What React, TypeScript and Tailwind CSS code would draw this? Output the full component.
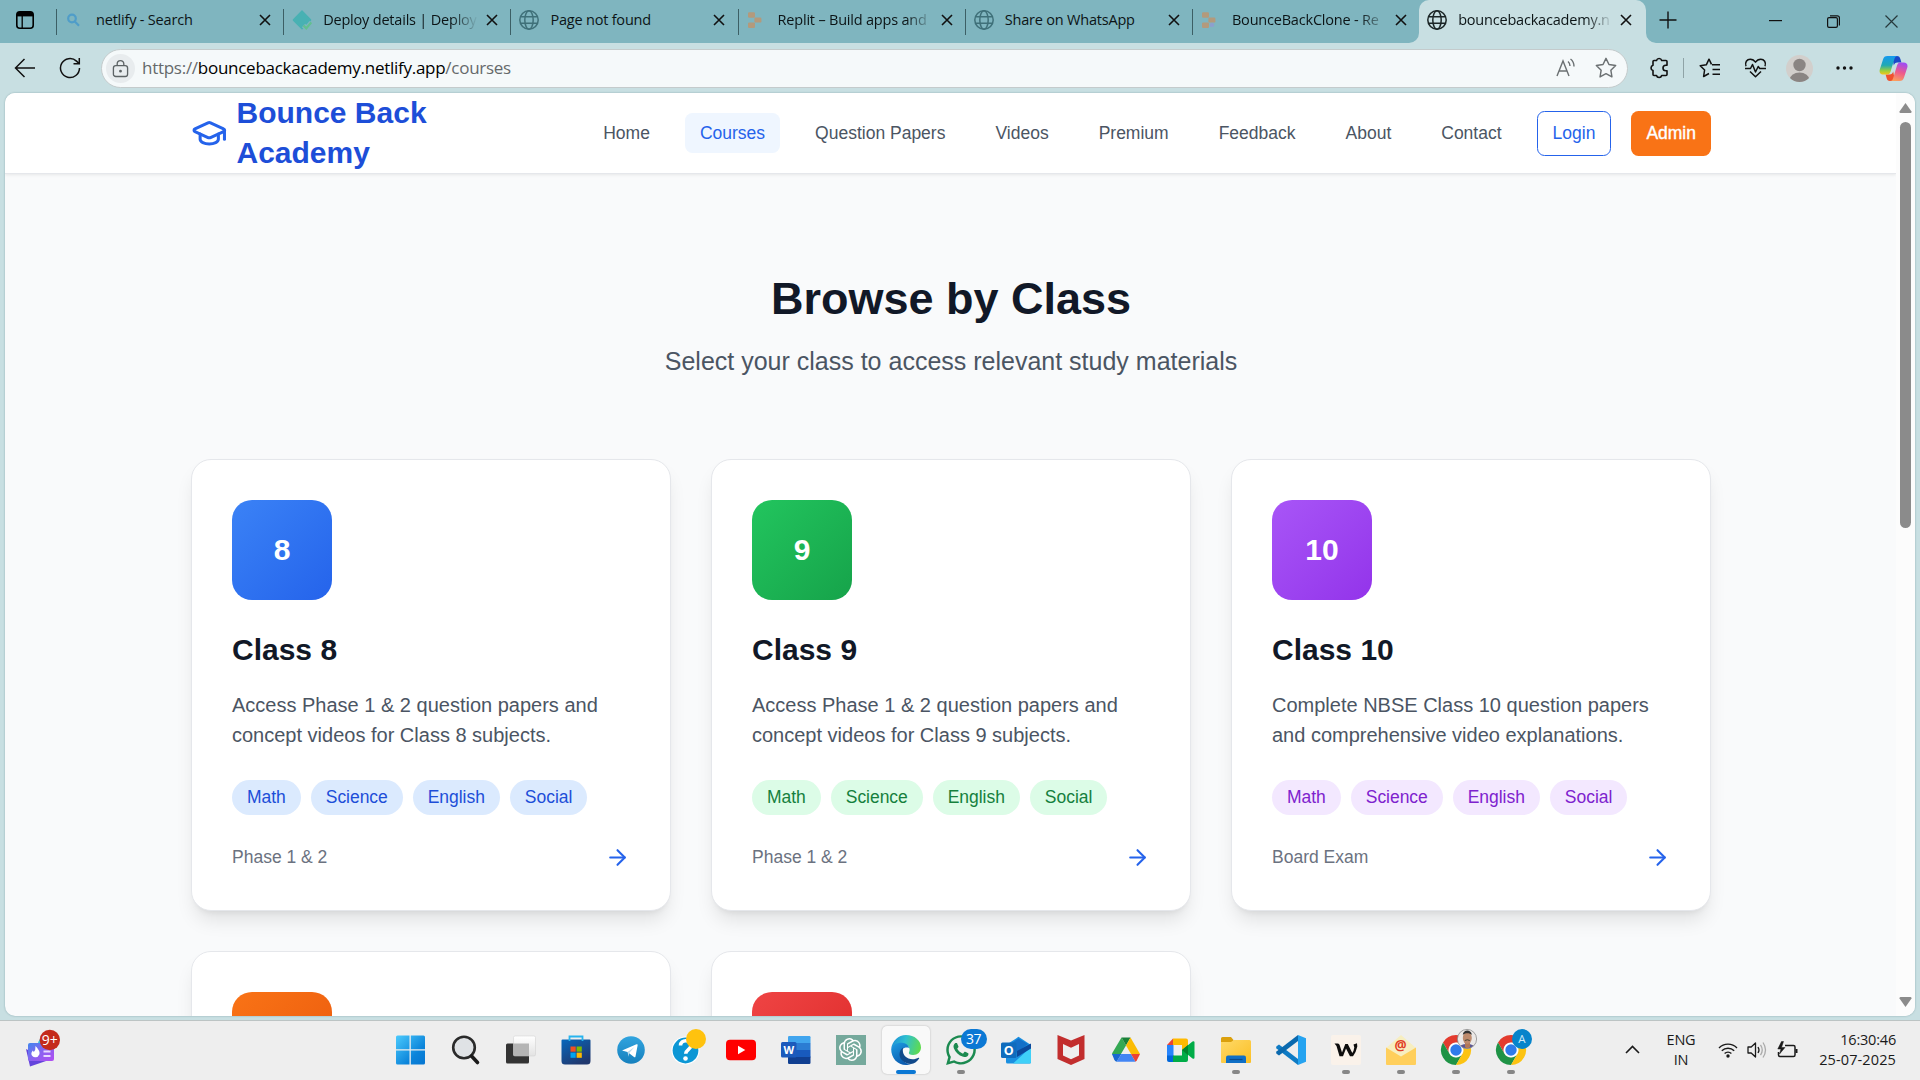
import type { ReactNode } from "react";
import { ArrowRight, GraduationCap } from "lucide-react";
import { FaWhatsapp } from "react-icons/fa";
import { SiOpenai } from "react-icons/si";

const ui = "font-['Open_Sans','Noto_Sans',sans-serif]";

/* ---------- Browser chrome ---------- */

function CloseX({ className = "" }: { className?: string }) {
  return (
    <svg className={className} width="12" height="12" viewBox="0 0 12 12" stroke="#111" strokeWidth="1.6" fill="none">
      <path d="M1 1l10 10M11 1L1 11" />
    </svg>
  );
}

function Globe({ color, width = 1.5 }: { color: string; width?: number }) {
  return (
    <svg width="20" height="20" viewBox="0 0 20 20" fill="none" stroke={color} strokeWidth={width}>
      <circle cx="10" cy="10" r="9.2" />
      <ellipse cx="10" cy="10" rx="4.2" ry="9.2" />
      <path d="M1.6 6.8h16.8M1.6 13.2h16.8" />
    </svg>
  );
}

function SearchFavicon() {
  return (
    <svg width="20" height="20" viewBox="0 0 20 20" fill="none" stroke="#4f9dc9" strokeWidth="2.2">
      <circle cx="7" cy="8.5" r="3.8" />
      <path d="M9.8 11.5l4.2 4.2" />
    </svg>
  );
}

function DeployFavicon() {
  return (
    <svg width="20" height="20" viewBox="0 0 20 20">
      <path d="M9.500 .5q.5-.5 1 0l8.500 8.800q.7.700 0 1.400l-8.500 8.600q-.5.500-1 0L1 10.700q-.7-.7 0-1.400z" fill="#48b1b3" />
      <path d="M11.500 15.500l2.800 2.800 5-5.800" fill="none" stroke="#7fb5bf" strokeWidth="4.600" />
      <path d="M11.500 15.500l2.800 2.800 5-5.800" fill="none" stroke="#62c08f" strokeWidth="2.200" />
    </svg>
  );
}

function ReplitFavicon({ dotted = false }: { dotted?: boolean }) {
  return (
    <svg width="20" height="20" viewBox="0 0 20 20" fill="#b39a7c">
      <rect x="1" y="2.2" width="7" height="5.6" rx="1.2" />
      <rect x="7.400" y="7.600" width="7" height="5" rx="1.2" />
      <rect x="1" y="12.400" width="7" height="5.600" rx="1.2" />
      {dotted && <circle cx="11" cy="14.900" r="2.200" fill="#8e9fce" />}
    </svg>
  );
}

const tabs: { title: string; icon: ReactNode; fade?: boolean }[] = [
  { title: "netlify - Search", icon: <SearchFavicon /> },
  { title: "Deploy details | Deploy", icon: <DeployFavicon />, fade: true },
  { title: "Page not found", icon: <Globe color="#3f7079" /> },
  { title: "Replit – Build apps and", icon: <ReplitFavicon />, fade: true },
  { title: "Share on WhatsApp", icon: <Globe color="#3f7079" /> },
  { title: "BounceBackClone - Re", icon: <ReplitFavicon dotted />, fade: true },
];

function TabLabel({ title, fade }: { title: string; fade?: boolean }) {
  return (
    <span
      className={`ml-[11px] w-[155px] whitespace-nowrap text-[14.5px] leading-5 tracking-[-0.2px] text-[#0c1416] ${
        fade ? "[mask-image:linear-gradient(to_right,#000_128px,transparent_155px)]" : ""
      }`}
    >
      {title}
    </span>
  );
}

function TabStrip() {
  return (
    <div className="flex h-[43px] bg-[#7fb5bf]">
      <div className="flex w-14 items-center pb-[3px] pl-4">
        <svg width="18" height="18" viewBox="0 0 18 18" fill="none" stroke="#000" strokeWidth="1.6">
          <rect x=".8" y=".8" width="16.4" height="16.4" rx="3" />
          <path d="M1 3.2h16" strokeWidth="4.4" />
          <path d="M6.2 5v12" strokeWidth="1.3" />
        </svg>
      </div>
      {tabs.map((t) => (
        <div key={t.title} className="flex w-[227.200px] items-center pb-[3px]">
          <span className="mt-1 h-[26px] w-px bg-[#3c5f65]" />
          <span className="ml-2">{t.icon}</span>
          <TabLabel title={t.title} fade={t.fade} />
          <CloseX className="ml-[8px]" />
        </div>
      ))}
      <div className="relative flex w-[227px] items-center rounded-t-[10px] bg-[#c8dfe2] pb-[3px]">
        <svg className="absolute -left-2.5 bottom-0" width="10" height="10" fill="#c8dfe2"><path d="M10 0v10H0A10 10 0 0 0 10 0z" /></svg>
        <svg className="absolute -right-2.5 bottom-0" width="10" height="10" fill="#c8dfe2"><path d="M0 0v10h10A10 10 0 0 1 0 0z" /></svg>
        <span className="ml-2"><Globe color="#1b2526" /></span>
        <TabLabel title="bouncebackacademy.n" fade />
        <CloseX className="ml-[7px]" />
      </div>
      <svg className="ml-[13px] mt-[11px]" width="18" height="18" viewBox="0 0 18 18" stroke="#111" strokeWidth="1.4"><path d="M9 .5v17M.5 9h17" /></svg>
      <div className="ml-auto flex items-start gap-[45px] pr-[22px] pt-[15px]">
        <svg width="13" height="13" stroke="#111" strokeWidth="1.2"><path d="M0 5.6h13" /></svg>
        <svg width="13" height="13" viewBox="0 0 13 13" fill="none" stroke="#111" strokeWidth="1.2">
          <rect x=".6" y="2.6" width="9.8" height="9.8" rx="1.4" />
          <path d="M3 .8h7.400a2 2 0 0 1 2 2v7.600" />
        </svg>
        <svg width="13" height="13" stroke="#26383b" strokeWidth="1.2"><path d="M.5 .5l12 12M12.5 .5l-12 12" /></svg>
      </div>
    </div>
  );
}

const starPath = "M10 1.2l2.7 5.6 6.1.9-4.4 4.3 1 6.1-5.4-2.9-5.4 2.9 1-6.1L1.2 7.7l6.1-.9z";

function CopilotLogo() {
  return (
    <svg width="29" height="27" viewBox="0 0 29 27">
      <defs>
        <linearGradient id="cpl" x1="0" y1="0" x2="0" y2="1">
          <stop offset="0" stopColor="#1599f0" />
          <stop offset=".5" stopColor="#20a9b4" />
          <stop offset=".8" stopColor="#9ccf3a" />
          <stop offset="1" stopColor="#f5c518" />
        </linearGradient>
        <linearGradient id="cpr" x1=".6" y1="0" x2=".3" y2="1">
          <stop offset="0" stopColor="#a14df2" />
          <stop offset=".5" stopColor="#ee5a8c" />
          <stop offset="1" stopColor="#fba15c" />
        </linearGradient>
      </defs>
      <path d="M13 1h5c2 0 2.800 1 3.400 3l1 3.500h-4c-2 0-3 1-3.600 3z" fill="#1b49c8" />
      <path d="M16 26h-5c-2 0-3-1-3.400-3l-1-3.500h4c2 0 3-1 3.600-3z" fill="#f0512d" />
      <path d="M8.500 1H19c-2 0-3 1-3.600 3l-3.800 12.500c-.6 2-1.500 3-3.600 3H4.500c-3 0-4.500-2-3.700-5L4 4.500C4.700 2 6 1 8.500 1z" fill="url(#cpl)" />
      <path d="M20.500 26H11c2 0 2.600-1 3.200-3L18 10.500c.6-2 1.500-3 3.600-3h3c3 0 4.500 2 3.700 5L25 22.500c-.7 2.500-2 3.500-4.500 3.500z" fill="url(#cpr)" />
    </svg>
  );
}

function Toolbar() {
  return (
    <div className="flex h-[50px] items-center bg-[#c8dfe2] pl-[14px] pr-[12px]">
      <svg width="22" height="22" viewBox="0 0 22 22" fill="none" stroke="#111" strokeWidth="1.5"><path d="M21 11H1.500M10.500 2L1.500 11l9 9" /></svg>
      <svg className="ml-[23px]" width="22" height="22" viewBox="0 0 22 22" fill="none" stroke="#111" strokeWidth="1.5">
        <path d="M20.500 11a9.500 9.500 0 1 1-3-6.900l2.500 2.400M20.300 1v5.800h-5.800" />
      </svg>
      <div className="ml-5 flex h-[39px] w-[1527px] items-center rounded-full border border-[#c4cbcc] bg-[#f5f9fa] pl-1 pr-[10px]">
        <span className="flex size-[29px] items-center justify-center rounded-full bg-[#e8ecee]">
          <svg width="17" height="19" viewBox="0 0 18 19" fill="none" stroke="#5d6365" strokeWidth="1.4">
            <rect x="1.5" y="6.5" width="15" height="11.5" rx="2.5" />
            <path d="M5.500 6.500V4.600a3.500 3.500 0 0 1 7 0v1.900" />
            <circle cx="9" cy="12.3" r=".8" fill="#5d6365" />
          </svg>
        </span>
        <span className="ml-[7px] whitespace-nowrap text-[17px] leading-6 tracking-[-0.27px] text-[#65696b]">
          https://<span className="text-black">bouncebackacademy.netlify.app</span>/courses
        </span>
        <svg className="ml-auto" width="20" height="20" viewBox="0 0 20 20" fill="none" stroke="#6b7072" strokeWidth="1.4">
          <path d="M1 18L7 3l6 15M3 13h8M12 3.500c1.500 1.200 2 2.800 2 4.500M14.500 1c2.500 1.800 3.500 4.500 3.500 7.500" />
        </svg>
        <svg className="ml-[19px]" width="22" height="22" viewBox="0 0 20 20" fill="none" stroke="#6b7072" strokeWidth="1.3" strokeLinejoin="round"><path d={starPath} /></svg>
      </div>
      <svg className="ml-[21px]" width="20" height="22" viewBox="0 0 20 22" fill="none" stroke="#111" strokeWidth="1.6" strokeLinejoin="round">
        <path d="M4 4.500a1 1 0 0 1 1-1h2.500a2.700 2.700 0 0 1 5.200 0H17a1 1 0 0 1 1 1v3.700h-1.200a2.800 2.800 0 0 0 0 5.600H18v3.700a1 1 0 0 1-1 1h-4.300a2.700 2.700 0 0 1-5.200 0H5a1 1 0 0 1-1-1v-4a2.700 2.700 0 0 1 0-5.200z" />
      </svg>
      <span className="ml-[14px] h-5 w-px bg-[#8fa3a6]" />
      <svg className="ml-[15px]" width="22" height="20" viewBox="0 0 22 20" fill="none" stroke="#111" strokeWidth="1.5" strokeLinejoin="round">
        <path d="M12.500 6.300L10 1.200 7.300 6.800l-6.100.9L5.600 12l-1 6.500 5.400-3" />
        <path d="M13 6.700h8M13.500 11.500H21M13.500 16.200H21" />
      </svg>
      <svg className="ml-[23px]" width="23" height="20" viewBox="0 0 23 20" fill="none" stroke="#111" strokeWidth="1.5" strokeLinejoin="round">
        <path d="M2 8.300C.5 4.300 3 1.200 6.200 1.200c2.300 0 4 1 5.300 3 1.300-2 3-3 5.300-3C20 1.200 22.500 4.300 21 8.300" />
        <path d="M1 10.500h5.500l2-4 3 7.500 2.700-5.500 1.500 2H22M6 13.500l5.500 5.300 5.500-5.300" />
      </svg>
      <svg className="ml-[19px]" width="27" height="27" viewBox="0 0 27 27">
        <clipPath id="av"><circle cx="13.500" cy="13.500" r="13.500" /></clipPath>
        <g clipPath="url(#av)"><rect width="27" height="27" fill="#d2cfcc" /><circle cx="13.500" cy="10" r="6.200" fill="#8a8583" /><ellipse cx="13.500" cy="25" rx="10" ry="7.500" fill="#8a8583" /></g>
      </svg>
      <svg className="ml-[23px]" width="17" height="4" fill="#111"><circle cx="2" cy="2" r="1.700" /><circle cx="8.500" cy="2" r="1.700" /><circle cx="15" cy="2" r="1.700" /></svg>
      <span className="ml-auto"><CopilotLogo /></span>
    </div>
  );
}

/* ---------- Web page ---------- */

const navLinks = ["Home", "Courses", "Question Papers", "Videos", "Premium", "Feedback", "About", "Contact"];

function SiteHeader() {
  return (
    <header className="relative flex h-[81px] items-center justify-between border-b border-[#e5e7eb] bg-white pl-[186px] pr-[185px] shadow-[0_1px_3px_rgba(0,0,0,0.08)]">
      <div className="flex items-center gap-[9px]">
        <GraduationCap className="size-[36.5px] text-[#2563eb]" strokeWidth={2} />
        <div className="w-[215px] text-[30px] font-bold leading-10 text-[#1d4ed8]">Bounce Back Academy</div>
      </div>
      <nav className="flex items-center gap-5 text-[17.5px] leading-[25px]">
        {navLinks.map((l) => (
          <a
            key={l}
            className={`whitespace-nowrap rounded-[7.5px] px-[15px] py-[7.5px] ${
              l === "Courses" ? "bg-[#eff6ff] text-[#2563eb]" : "text-[#4b5563]"
            }`}
          >
            {l}
          </a>
        ))}
        <a className="rounded-[7.5px] border border-[#2563eb] px-[15px] py-[9px] text-[#2563eb]">Login</a>
        <a className="rounded-[7.5px] bg-[#f97316] px-[15px] py-2.5 text-white [-webkit-text-stroke:0.4px_white]">Admin</a>
      </nav>
    </header>
  );
}

type ClassInfo = {
  n: string;
  badge: string;
  pill: string;
  text: string[];
  note: string;
};

const classes: ClassInfo[] = [
  { n: "8", badge: "from-[#3b82f6] to-[#2563eb]", pill: "bg-[#dbeafe] text-[#1d4ed8]", text: ["Access Phase 1 & 2 question papers and", "concept videos for Class 8 subjects."], note: "Phase 1 & 2" },
  { n: "9", badge: "from-[#22c55e] to-[#16a34a]", pill: "bg-[#dcfce7] text-[#15803d]", text: ["Access Phase 1 & 2 question papers and", "concept videos for Class 9 subjects."], note: "Phase 1 & 2" },
  { n: "10", badge: "from-[#a855f7] to-[#9333ea]", pill: "bg-[#f3e8ff] text-[#7e22ce]", text: ["Complete NBSE Class 10 question papers", "and comprehensive video explanations."], note: "Board Exam" },
];

/* Cards of the second row: only their tops reach into the viewport. */
const nextBadges = ["from-[#f97316] to-[#ea580c]", "from-[#ef4444] to-[#dc2626]"];

const cardClass =
  "rounded-[20px] border border-[#e5e7eb] bg-white p-10 shadow-[0_12.5px_19px_-4px_rgba(0,0,0,0.1),0_5px_7.5px_-5px_rgba(0,0,0,0.1)]";

function ClassCard({ c }: { c: ClassInfo }) {
  return (
    <article className={cardClass}>
      <div className={`flex size-[100px] items-center justify-center rounded-[20px] bg-linear-to-br text-[30px] font-bold leading-10 text-white ${c.badge}`}>{c.n}</div>
      <h3 className="mt-[30px] text-[30px] font-bold leading-10 text-[#111827]">Class {c.n}</h3>
      <p className="mt-5 whitespace-nowrap text-xl leading-[30px] text-[#4b5563]">
        {c.text[0]}
        <br />
        {c.text[1]}
      </p>
      <div className="mt-[30px] flex gap-2.5">
        {["Math", "Science", "English", "Social"].map((s) => (
          <span key={s} className={`rounded-full px-[15px] py-[5px] text-[17.5px] leading-[25px] tracking-[-0.04px] ${c.pill}`}>{s}</span>
        ))}
      </div>
      <div className="mt-[30px] flex items-center justify-between">
        <span className="text-[17.5px] leading-[25px] text-[#6b7280]">{c.note}</span>
        <ArrowRight className="size-[25px] text-[#2563eb]" strokeWidth={2} />
      </div>
    </article>
  );
}

function WebPage() {
  return (
    <div className="mx-[5px] flex h-[923px] overflow-hidden rounded-[10px] bg-[#f9fafb] font-['Liberation_Sans',Arial,sans-serif] shadow-[0_0_2px_rgba(0,60,70,0.35)]">
      <main className="h-full min-w-0 flex-1 overflow-hidden">
        <SiteHeader />
        <section className="pl-[186px] pr-[185px] pt-[100px]">
          <h1 className="text-center text-[45px] font-bold leading-[50px] text-[#111827]">Browse by Class</h1>
          <p className="mt-5 text-center text-[25px] leading-[35px] text-[#4b5563]">Select your class to access relevant study materials</p>
          <div className="mt-20 grid grid-cols-3 gap-10">
            {classes.map((c) => (
              <ClassCard key={c.n} c={c} />
            ))}
            {nextBadges.map((b) => (
              <article key={b} className={cardClass}>
                <div className={`size-[100px] rounded-[20px] bg-linear-to-br ${b}`} />
              </article>
            ))}
          </div>
        </section>
      </main>
      <div className="flex w-[19px] flex-col items-center bg-[#fcfcfc] pb-[9px] pt-[10px]">
        <svg width="13" height="10" fill="#8b8b8b"><path d="M6.500 0l6 8.500q.3 1.500-1 1.500h-10q-1.300 0-1-1.500z" /></svg>
        <div className="mt-[9px] h-[406px] w-[11px] rounded-full bg-[#8b8b8b]" />
        <svg className="mt-auto" width="13" height="10" fill="#8b8b8b"><path d="M6.500 10l6-8.500q.3-1.500-1-1.500h-10q-1.300 0-1 1.500z" /></svg>
      </div>
    </div>
  );
}

/* ---------- Taskbar ---------- */

function Ic({ children }: { children: ReactNode }) {
  return <svg width="30" height="30" viewBox="0 0 30 30" className="overflow-visible">{children}</svg>;
}

function Chrome() {
  return (
    <>
      <path d="M2 7.500a15 15 0 0 1 26 0H15A7.500 7.500 0 0 0 8.500 18.750z" fill="#e33b2e" />
      <path d="M2 7.500L8.500 18.750A7.500 7.500 0 0 0 21.500 18.750L15 30A15 15 0 0 1 2 7.500z" fill="#1f9346" />
      <path d="M28 7.500H15a7.500 7.500 0 0 1 6.500 11.250L15 30A15 15 0 0 0 28 7.500z" fill="#fcc312" />
      <circle cx="15" cy="15" r="7.2" fill="#fff" />
      <circle cx="15" cy="15" r="5.7" fill="#2f7bea" />
    </>
  );
}

const apps: { id: string; icon: ReactNode; running?: boolean; active?: boolean }[] = [
  {
    id: "start",
    icon: (
      <Ic>
        <linearGradient id="win" gradientUnits="userSpaceOnUse" x1="0" y1="0" x2="30" y2="30"><stop offset="0" stopColor="#4ccbfd" /><stop offset=".65" stopColor="#0b84da" /><stop offset="1" stopColor="#0574d0" /></linearGradient>
        <path d="M1.500 .5H13.500V14.300H0V2A1.500 1.500 0 0 1 1.500 .5zM14.800 .5H27.500A1.500 1.500 0 0 1 29 2V14.300H14.800zM0 15.600H13.500V29.500H1.500A1.500 1.500 0 0 1 0 28zM14.800 15.600H29V28A1.500 1.500 0 0 1 27.500 29.500H14.800z" fill="url(#win)" />
      </Ic>
    ),
  },
  {
    id: "search",
    icon: (
      <Ic>
        <circle cx="13" cy="12.5" r="10.8" fill="#dfe2e5" stroke="#2a2a2a" strokeWidth="2.6" />
        <path d="M20.500 21l6 6.500" stroke="#1b1b1b" strokeWidth="3.600" strokeLinecap="round" />
      </Ic>
    ),
  },
  {
    id: "taskview",
    icon: (
      <Ic>
        <linearGradient id="tv" x1="0" y1="0" x2="0" y2="1"><stop offset="0" stopColor="#fff" /><stop offset="1" stopColor="#e2e2e2" /></linearGradient>
        <rect x="0" y="8.500" width="23" height="20" rx="1.500" fill="#333" />
        <rect x="7.500" y="1" width="22" height="20" rx="1.500" fill="url(#tv)" stroke="#ccc" strokeWidth=".5" />
        <path d="M7.500 8.500H23V21H8.500q-1 0-1-1z" fill="#b4b4b4" />
      </Ic>
    ),
  },
  {
    id: "store",
    icon: (
      <Ic>
        <linearGradient id="st" x1="0" y1="0" x2=".6" y2="1"><stop offset="0" stopColor="#0868bd" /><stop offset="1" stopColor="#20386e" /></linearGradient>
        <path d="M1.500 4.500h27a1 1 0 0 1 1 1V26a3.500 3.500 0 0 1-3.500 3.500H4A3.500 3.500 0 0 1 .5 26V5.500a1 1 0 0 1 1-1z" fill="url(#st)" />
        <path d="M8.500 6V1.500h13V6" fill="none" stroke="#28b4ee" strokeWidth="1.800" />
        <path d="M9.500 11.500h5.200v5.200H9.500z" fill="#f25022" /><path d="M15.600 11.500h5.200v5.200h-5.200z" fill="#7fba00" />
        <path d="M9.500 17.600h5.200v5.200H9.500z" fill="#00a4ef" /><path d="M15.600 17.600h5.200v5.200h-5.200z" fill="#ffb900" />
      </Ic>
    ),
  },
  {
    id: "telegram",
    icon: (
      <Ic>
        <linearGradient id="tg" x1="0" y1="0" x2="0" y2="1"><stop offset="0" stopColor="#31a4df" /><stop offset="1" stopColor="#1680bd" /></linearGradient>
        <circle cx="15" cy="15" r="13.8" fill="url(#tg)" />
        <path d="M6 15.500L20.500 9.300c.8-.3 1.300.2 1.100 1.100L19.500 21.500c-.2.900-.8 1-1.500.6L11.500 17z" fill="#fff" />
        <path d="M11.500 17l7-5-5.300 6.100-.5 3.600z" fill="#b9d8ea" />
      </Ic>
    ),
  },
  {
    id: "help",
    icon: (
      <Ic>
        <circle cx="14.500" cy="15.500" r="13.500" fill="#0c97d5" stroke="#fff" strokeWidth="1.200" />
        <path d="M9.500 10.500c0-6.500 10.500-6 10.500-.3 0 4.500-5.300 4.200-5.300 8.600" fill="none" stroke="#fff" strokeWidth="3.600" />
        <circle cx="14.500" cy="23.500" r="2.300" fill="#fff" />
        <circle cx="25" cy="4" r="10" fill="#ffc20e" />
      </Ic>
    ),
  },
  {
    id: "youtube",
    icon: (
      <Ic>
        <rect x="0" y="4.800" width="30" height="20.500" rx="4" fill="#f00" />
        <path d="M12 10.800v8.400l7.300-4.200z" fill="#fff" />
      </Ic>
    ),
  },
  {
    id: "word",
    icon: (
      <Ic>
        <rect x="7" y="1" width="22.500" height="7.500" rx="1.200" fill="#41a5ee" /><rect x="7" y="8" width="22.500" height="7" fill="#2b7cd3" />
        <rect x="7" y="21" width="22.500" height="8" rx="1.200" fill="#103f91" /><rect x="7" y="15" width="22.500" height="7" fill="#185abd" />
        <rect x="0" y="7" width="15.500" height="15.500" rx="1.500" fill="#1b5abc" />
        <text x="7.700" y="18.800" textAnchor="middle" fontSize="11" fontWeight="700" fill="#fff">W</text>
      </Ic>
    ),
  },
  {
    id: "chatgpt",
    icon: <span className="flex size-[30px] items-center justify-center bg-[#75a99c]"><SiOpenai size={23} color="#fff" /></span>,
  },
  {
    id: "edge",
    active: true,
    icon: (
      <Ic>
        <linearGradient id="eg" x1="0" y1=".3" x2="1" y2=".5"><stop offset="0" stopColor="#1c8fd8" /><stop offset=".45" stopColor="#2fc0d0" /><stop offset="1" stopColor="#5fdb4f" /></linearGradient>
        <linearGradient id="eb" x1="0" y1="0" x2=".5" y2="1"><stop offset="0" stopColor="#1d9de2" /><stop offset="1" stopColor="#0b5cb0" /></linearGradient>
        <path d="M.2 14C1 6 7.500 0 15 0c8.500 0 15 5.500 15 12.500 0 4.500-3.500 7.500-7.800 7.500-3.500 0-4.900-1.300-4.200-2.700 2-3.300-.5-8.300-6.500-8.300-5 0-9.500 1.800-11.300 5z" fill="url(#eg)" />
        <path d="M.2 14C2 9.500 6.500 7.500 11 7.800c3.500.2 6.500 2 7 5.200-4-1.500-8.500 1-8.500 6 0 5.500 4.500 10 10.500 10-2 .8-3.500 1-5 1C6.500 30 .1 23 .2 14z" fill="url(#eb)" />
        <path d="M12.200 12.600c-1.200 4 .3 9 5.300 10.900 4 1.500 7.500.5 10-.8q1.200-.2.500 1c-2 3-5 5-8 5.300-6.500-.3-11.500-4.500-11.500-9.500 0-3.200 1.500-5.500 3.700-6.900z" fill="#114a8b" />
      </Ic>
    ),
  },
  {
    id: "whatsapp",
    running: true,
    icon: (
      <span className="relative flex size-[30px] items-center justify-center">
        <FaWhatsapp size={34} color="#1b8a50" className="shrink-0" />
        <span className="absolute -right-[11px] -top-[6px] flex h-5 w-[26px] items-center justify-center rounded-full bg-[#0b78d4] text-[14px] leading-5 tracking-[-0.5px] text-white">37</span>
      </span>
    ),
  },
  {
    id: "outlook",
    icon: (
      <Ic>
        <path d="M5 10L17.500 1.800 30 10v17a1.500 1.500 0 0 1-1.500 1.500h-22A1.500 1.500 0 0 1 5 27z" fill="#1a8fe0" />
        <path d="M8 10l9.500-6.500L27 9 15 18z" fill="#1470c8" />
        <path d="M30 12v15a1.500 1.500 0 0 1-1.500 1.500H12z" fill="#3fd0f8" />
        <path d="M30 8.500v5L16 22v-6z" fill="#0c4a9c" />
        <rect x="0" y="7.500" width="15.500" height="15.500" rx="1.500" fill="#0f6cbd" />
        <text x="7.700" y="19.800" textAnchor="middle" fontSize="12.500" fontWeight="700" fill="#fff">O</text>
      </Ic>
    ),
  },
  {
    id: "mcafee",
    icon: (
      <Ic>
        <path d="M1.500 0L15 5.500 28.500 0v24L15 30 1.500 24z" fill="#c22e2e" />
        <path d="M7 9l8 3.800L23 9v11.500l-8 3.800-8-3.800z" fill="#eee" />
      </Ic>
    ),
  },
  {
    id: "drive",
    icon: (
      <Ic>
        <path d="M10.500 2.500L1 18.500l4.500 8 9.500-16z" fill="#34a853" /><path d="M10.500 2.500h9L15 10.500z" fill="#188038" />
        <path d="M19.500 2.500L15 10.500l5 8.500h9z" fill="#fbbc04" /><path d="M1 19h9.300l-4.800 7.800q-1.500-.5-2.200-2z" fill="#1967d2" />
        <path d="M10.300 19H20l4.500 7.800h-19z" fill="#4285f4" /><path d="M20 19h9l-2.500 5q-.6 2-2 2.800z" fill="#ea4335" />
      </Ic>
    ),
  },
  {
    id: "meet",
    icon: (
      <Ic>
        <path d="M1 10l6-6.500V10z" fill="#ea4335" /><path d="M1 10h6.500v11H1z" fill="#2684fc" /><path d="M1 20.500h6.500V27H3a2 2 0 0 1-2-2z" fill="#0066da" />
        <path d="M7 3.500h13a2 2 0 0 1 2 2V13l-6 3v-6H7z" fill="#ffba00" /><path d="M7 20.500h9V15h6v10a2 2 0 0 1-2 2H7z" fill="#00ac47" />
        <path d="M16 15l10.500-8.500q2-1 2 1v15q0 2-2 1z" fill="#00ac47" /><path d="M16 15l6-5v10z" fill="#00832d" />
      </Ic>
    ),
  },
  {
    id: "explorer",
    running: true,
    icon: (
      <Ic>
        <linearGradient id="fx" x1="0" y1="0" x2="1" y2="1"><stop offset="0" stopColor="#ffd968" /><stop offset="1" stopColor="#fbbf24" /></linearGradient>
        <path d="M0 3.500A1.500 1.500 0 0 1 1.500 2H10l2.500 3v4H0z" fill="#dba00d" />
        <path d="M0 7h10l3-2h15.500A1.500 1.500 0 0 1 30 6.500V27a1 1 0 0 1-1 1H1a1 1 0 0 1-1-1z" fill="url(#fx)" />
        <path d="M5 28v-5.500q0-2 2-2h16q2 0 2 2V28z" fill="#0f6fc6" /><path d="M8.500 24.500h13" stroke="#0a4a8c" strokeWidth="1.200" />
      </Ic>
    ),
  },
  {
    id: "vscode",
    icon: (
      <Ic>
        <path d="M.5 11.300L3 9.500 22 24v6L.5 13.500q-.8-1 0-2.200z" fill="#0f7bc4" />
        <path d="M.5 18.700L3 20.500 22 6V0L.5 16.500q-.8 1 0 2.200z" fill="#0a69ae" />
        <path d="M22 0l8 3.200v23.600L22 30z" fill="#25a3f0" />
      </Ic>
    ),
  },
  {
    id: "w",
    running: true,
    icon: (
      <Ic>
        <rect width="30" height="30" rx="2" fill="#faf2ea" />
        <path d="M3.500 8.500h3.300q1.500.2 2 2l2.200 7 3.300-8.500h2.500l4.500 9q1.500-2 2-5.500l-.8-3 3.500-1.300.3 3.300q-1.300 6-4.300 9.800h-3L15 13.500l-3 7.800H8.500L5.500 11z" fill="#0d0d0d" />
      </Ic>
    ),
  },
  {
    id: "mail",
    running: true,
    icon: (
      <Ic>
        <path d="M0 13L15 0l15 13-15 9z" fill="#f7eec0" />
        <text x="14.500" y="14.500" textAnchor="middle" fontSize="13.500" fontWeight="700" fill="#e23b24">@</text>
        <path d="M0 12.500l15 9 15-9V29a1 1 0 0 1-1 1H1a1 1 0 0 1-1-1z" fill="#ffcf5c" />
      </Ic>
    ),
  },
  {
    id: "chrome-photo",
    running: true,
    icon: (
      <Ic>
        <Chrome />
        <clipPath id="ph"><circle cx="26" cy="4" r="9.600" /></clipPath>
        <g clipPath="url(#ph)">
          <rect x="16" y="-6" width="20" height="20" fill="#ebe8e6" />
          <path d="M17 15q1-6 9-6t9 6z" fill="#5d5791" /><path d="M24 7h5v5l-2.500 2L24 12z" fill="#b27958" />
          <ellipse cx="26.300" cy="3" rx="4.500" ry="6" fill="#bd8a6c" /><path d="M21.800 0c0-6 9-6 9 0-2-2.500-7-2.500-9 0z" fill="#333" /><path d="M23.800 5.500q2.500-1.500 5 0" stroke="#443" fill="none" />
        </g>
        <circle cx="26" cy="4" r="9.600" fill="none" stroke="#8b8b8b" strokeWidth=".8" />
      </Ic>
    ),
  },
  {
    id: "chrome-a",
    running: true,
    icon: (
      <Ic>
        <Chrome />
        <circle cx="26" cy="4" r="10" fill="#0684cb" />
        <text x="26" y="8.200" textAnchor="middle" fontSize="11.500" fill="#cfe9f7">A</text>
      </Ic>
    ),
  },
];

function Taskbar() {
  return (
    <div className="flex h-[60px] items-center border-t border-[#bcc4c4] bg-[#eeeeee] pb-[2px] text-[#1a1a1a]">
      <div className="w-[383px] pl-[26px]">
        <svg width="36" height="40" viewBox="0 0 36 40" className="mb-0.5 block">
          <linearGradient id="wd" x1="0" y1="0" x2="1" y2="1"><stop offset="0" stopColor="#3f86ee" /><stop offset=".5" stopColor="#8a63f0" /><stop offset="1" stopColor="#b24df2" /></linearGradient>
          <path d="M0 20l4 17.500L23 31z" fill="#6544dc" />
          <path d="M12 16q0-8 8-8v10z" fill="#3cc0dd" />
          <rect x="2" y="14" width="26" height="18" rx="2" fill="url(#wd)" />
          <path d="M9.500 17q5 5 3.800 8.500a4.200 4.200 0 0 1-8-.5q0-2 1.500-3.500l1 1.500q2-2 1.700-6z" fill="#fff" />
          <path d="M17.500 22.500h7M17.500 27h7" stroke="#e9d9ff" strokeWidth="1.800" />
          <circle cx="23.800" cy="11" r="10.200" fill="#c42b1c" />
          <text x="23.800" y="16" textAnchor="middle" fontSize="14" fill="#fff">9+</text>
        </svg>
      </div>
      {apps.map((a) => (
        <div key={a.id} className="relative flex h-full w-[55px] items-center justify-center">
          <div className={`flex size-12 items-center justify-center rounded-[5px] ${a.active ? "bg-[#f9f9f9] shadow-[0_0_2px_rgba(0,0,0,0.25)]" : ""}`}>{a.icon}</div>
          {a.active && <span className="absolute bottom-1 h-1 w-5 rounded-full bg-[#0b78d4]" />}
          {a.running && <span className="absolute bottom-1 h-1 w-2 rounded-full bg-[#868686]" />}
        </div>
      ))}
      <svg className="ml-[87px]" width="15" height="9" fill="none" stroke="#1a1a1a" strokeWidth="1.6"><path d="M1 8l6.500-6.500L14 8" /></svg>
      <div className="ml-[26px] w-[30px] text-center text-[14.5px] leading-5 tracking-[-0.2px]">
        ENG
        <br />
        IN
      </div>
      <svg className="ml-[22px]" width="20" height="16" viewBox="0 0 20 16" fill="none" stroke="#1a1a1a" strokeWidth="1.4">
        <path d="M1 6a12.500 12.500 0 0 1 18 0M3.800 8.800a8.800 8.800 0 0 1 12.400 0M6.600 11.600a5 5 0 0 1 6.800 0" />
        <circle cx="10" cy="14" r="1.700" fill="#1a1a1a" stroke="none" />
      </svg>
      <svg className="ml-[9px]" width="20" height="18" viewBox="0 0 20 18" fill="none" stroke="#1a1a1a" strokeWidth="1.3" strokeLinejoin="round">
        <path d="M1 6h3.200L8.500 2v14l-4.300-4H1zM11 6q2 3 0 6" />
        <path d="M13.500 3.800q3.500 5.200 0 10.400M16 1.500q5 7.500 0 15" stroke="#aaa" />
      </svg>
      <svg className="ml-[10px]" width="21" height="18" viewBox="0 0 21 18" fill="none" stroke="#1a1a1a" strokeWidth="1.5">
        <path d="M8 4.500h8.500q1.500 0 1.500 1.500v8q0 1.500-1.500 1.500H3q-1.500 0-1.500-1.500v-3" />
        <path d="M19.500 8v4" strokeWidth="2" />
        <path d="M4.500 .5L.8 8H4L2.500 13 8 6.500H4.500L6.500.5z" fill="#1a1a1a" strokeWidth=".5" />
      </svg>
      <div className="ml-auto whitespace-nowrap pr-6 text-right text-[14.5px] leading-5">
        <span className="tracking-[-0.2px]">16:30:46</span>
        <br />
        <span className="tracking-[0.12px]">25-07-2025</span>
      </div>
    </div>
  );
}

export default function App() {
  return (
    <div className={`flex h-[1080px] w-[1920px] flex-col overflow-hidden bg-[#c8dfe2] ${ui}`}>
      <TabStrip />
      <Toolbar />
      <WebPage />
      <div className="mt-auto">
        <Taskbar />
      </div>
    </div>
  );
}
